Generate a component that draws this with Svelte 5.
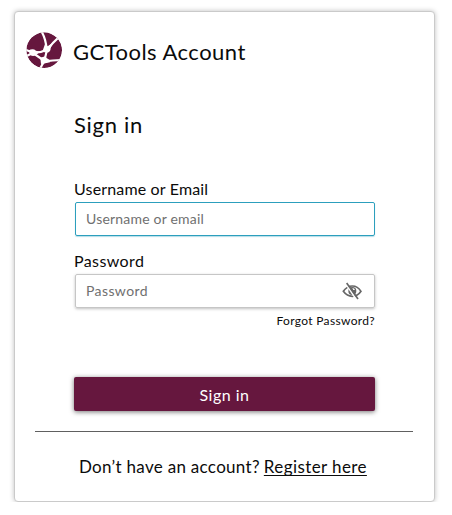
<script>
  let username = $state('');
  let password = $state('');
  let visible = $state(false);
</script>

<main class="card">
  <header class="brand">
    <svg class="logo" viewBox="78 96 108 108" aria-hidden="true">
      <defs>
        <clipPath id="globe"><circle cx="132.5" cy="150.5" r="53.5" /></clipPath>
      </defs>
      <g clip-path="url(#globe)">
        <circle cx="132.5" cy="150.5" r="53.5" fill="#66173e" />
        <g fill="none" stroke="#fff" stroke-width="6.5">
          <path d="M125 95Q138 118 140 149" />
          <path d="M176 112Q158 127 143 149" />
          <path d="M76 149L99 158Q120 159 141 149" />
          <path d="M98 159L80 168" />
          <path d="M99 159L133 183L141 149" />
          <path d="M184 180Q158 181 134 184Q127 192 120 207" />
        </g>
        <g fill="#fff">
          <path d="M135 132L143 139L158 128L152 144Q152 157 141 158L127 155Z" />
          <path d="M86 151Q99 144 108 152L120 155L111 163Q100 173 90 164Z" />
          <path d="M121 173L136 169Q139 177 148 179L150 187L136 190L123 192Z" />
        </g>
      </g>
    </svg>
    <span class="name">GCTools Account</span>
  </header>

  <form class="form" onsubmit={(e) => e.preventDefault()}>
    <h1>Sign in</h1>
    <label class="l-user" for="username">Username or Email</label>
    <div class="field active">
      <input id="username" class="i-user" placeholder="Username or email" bind:value={username} />
    </div>
    <label class="l-pass" for="password">Password</label>
    <div class="field">
      <input id="password" class="i-pass" type={visible ? 'text' : 'password'} placeholder="Password" bind:value={password} />
      <button class="eye" type="button" aria-label="Show password" onclick={() => (visible = !visible)}>
        <svg viewBox="0 0 60 54">
          <path d="M4 28Q15 12 31 12Q47 12 57 28Q47 43 31 43Q15 43 4 28Z" fill="none" stroke="#666" stroke-width="5" />
          <circle cx="31" cy="27" r="12" fill="#666" />
          <path d="M31 18Q37 18 39 24L34 24Z" fill="#fff" />
          <path d="M10 3L44 54" stroke="#fff" stroke-width="5" />
          <path d="M14 3L48 51" stroke="#666" stroke-width="5" />
        </svg>
      </button>
    </div>
    <a class="forgot" href="#forgot">Forgot Password?</a>
    <button class="submit" type="submit">Sign in</button>
  </form>

  <footer>
    <span class="ask">Don’t have an account?</span><a href="#register">Register here</a>
  </footer>
</main>

<style>
  :global(body) {
    margin: 0;
    background: #fff;
  }
  .card {
    display: flow-root;
    box-sizing: border-box;
    width: 421px;
    height: 491px;
    margin: 11px 0 0 14px;
    border: 1px solid #cacaca;
    border-radius: 4px;
    background: #fff;
    box-shadow: 0 0 5px rgba(0, 0, 0, 0.25);
    font-family: Lato, 'Open Sans', sans-serif;
    color: #0b0b0b;
  }
  .brand {
    display: flex;
    align-items: center;
    height: 36px;
    margin: 20px 0 0 11px;
  }
  .logo {
    width: 36px;
    height: 36px;
  }
  .name {
    margin: 2px 0 0 11px;
    font-size: 22px;
    letter-spacing: 0.48px;
    white-space: nowrap;
  }
  .form {
    display: flex;
    flex-direction: column;
    width: 301px;
    margin: 42px 0 0 59px;
  }
  h1 {
    margin: 0;
    height: 30px;
    font-size: 22px;
    line-height: 30px;
    font-weight: 400;
    letter-spacing: 0.7px;
  }
  label {
    height: 20px;
    font-size: 16px;
    line-height: 18px;
    letter-spacing: 0.16px;
  }
  .l-user {
    margin-top: 40px;
  }
  .l-pass {
    margin-top: 16px;
    letter-spacing: 0.4px;
  }
  .field {
    display: flex;
    align-items: center;
    box-sizing: border-box;
    width: 300px;
    height: 34px;
    margin: 2px 0 0 1px;
    border: 1px solid #c6c6c6;
    border-radius: 2px;
    box-shadow: 0 1px 3px rgba(0, 0, 0, 0.25);
  }
  .active {
    border-color: #2c9fbd;
    box-shadow: 0 1px 1px rgba(44, 159, 189, 0.35);
  }
  input {
    flex: 1;
    min-width: 0;
    padding: 0 0 1px 10px;
    border: 0;
    outline: 0;
    background: none;
    font: 14px Lato, sans-serif;
    letter-spacing: 0.2px;
  }
  .i-pass {
    letter-spacing: 0.4px;
  }
  input::placeholder {
    color: #707070;
    opacity: 1;
  }
  .eye {
    display: flex;
    width: 20px;
    height: 18px;
    margin: 0 12px 0 0;
    padding: 0;
    border: 0;
    background: none;
  }
  .eye svg {
    width: 20px;
    height: 18px;
  }
  .forgot {
    align-self: flex-end;
    margin: 5px 0 0;
    font-size: 12px;
    line-height: 16px;
    letter-spacing: 0.33px;
    color: #0b0b0b;
    text-decoration: none;
  }
  .submit {
    height: 34px;
    margin-top: 48px;
    padding: 0;
    border: 0;
    border-radius: 2px;
    background: #66173e;
    box-shadow: 0 1px 5px rgba(0, 0, 0, 0.55);
    font: 16px Lato, sans-serif;
    letter-spacing: 0.5px;
    color: #fff;
  }
  footer {
    display: flex;
    width: 378px;
    margin: 20px 0 0 20px;
    padding: 24px 0 0 44px;
    box-sizing: border-box;
    border-top: 1px solid #606060;
    font-size: 17px;
    line-height: 22px;
    letter-spacing: 0.3px;
    white-space: nowrap;
  }
  .ask {
    margin-right: 4px;
  }
  footer a {
    color: inherit;
    letter-spacing: 0.4px;
    text-decoration: underline;
    text-decoration-thickness: 1px;
    text-underline-offset: 2px;
    text-decoration-skip-ink: none;
  }
</style>
